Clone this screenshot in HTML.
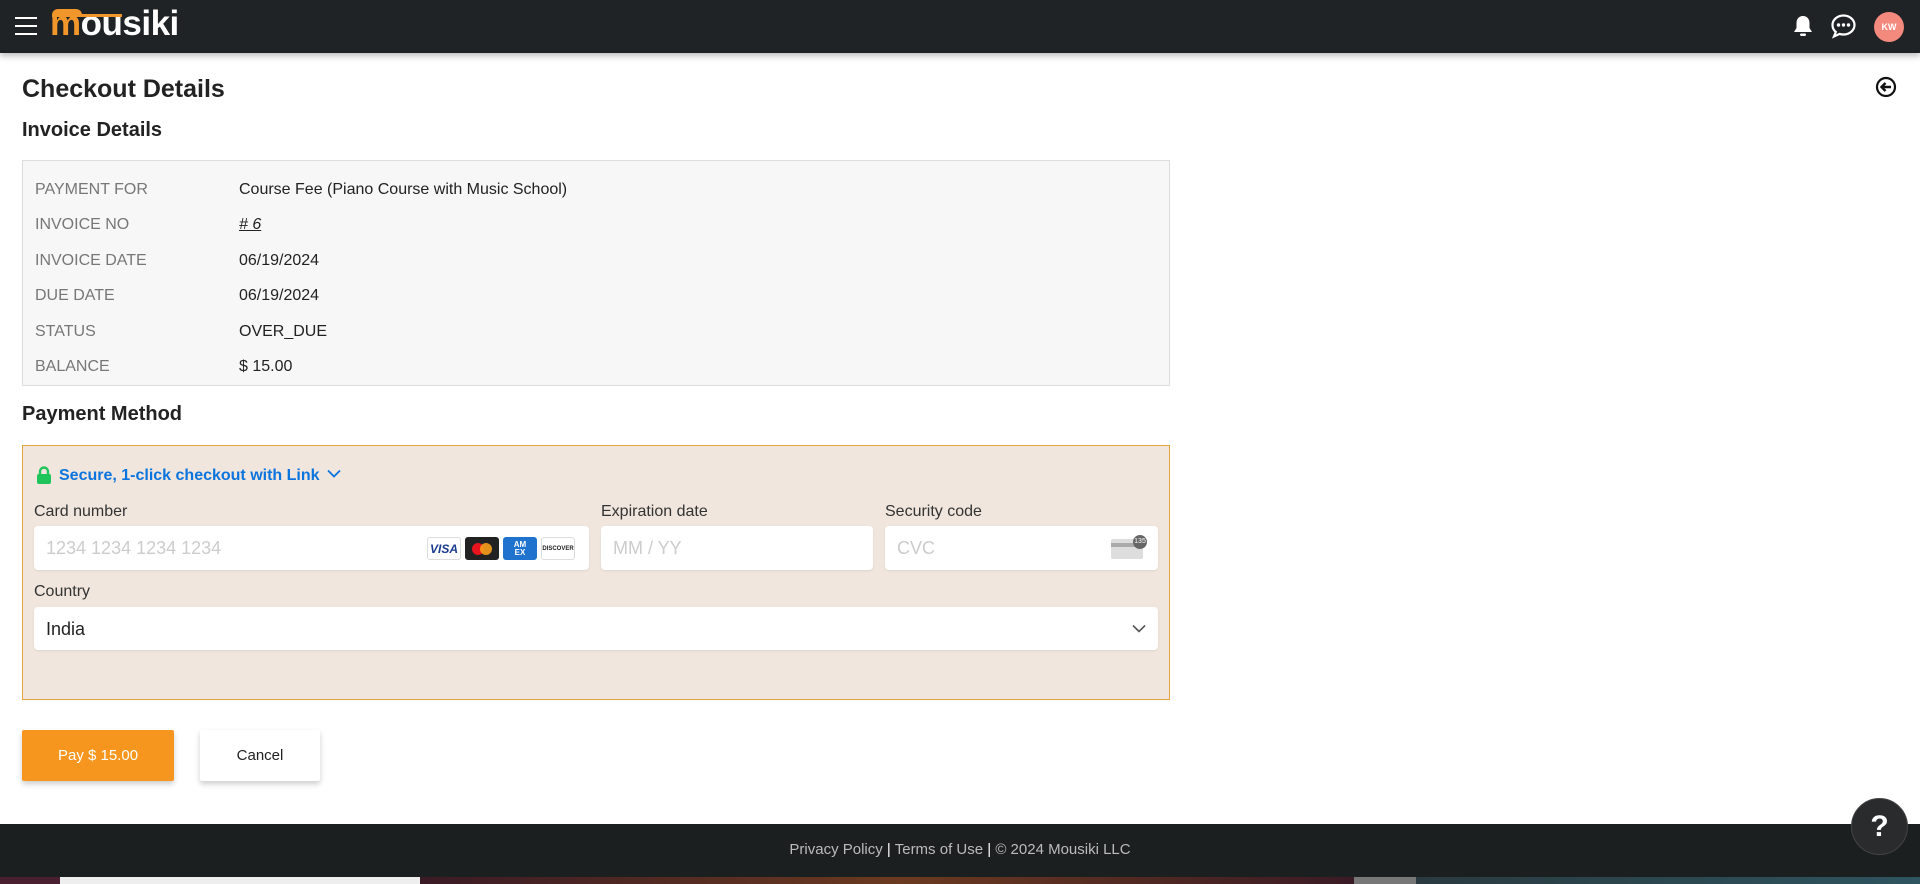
<!DOCTYPE html>
<html><head><meta charset="utf-8"><style>
*{box-sizing:border-box;margin:0;padding:0}
body{width:1920px;height:884px;overflow:hidden;background:#fff;font-family:"Liberation Sans",sans-serif;color:#222;position:relative}
.hdr{position:absolute;left:0;top:0;width:1920px;height:53px;background:#1f2326;box-shadow:0 3px 6px rgba(0,0,0,.25)}
.abs{position:absolute}
h1{position:absolute;left:22px;top:75px;font-size:25px;font-weight:bold;color:#222}
h2{position:absolute;left:22px;font-size:20px;font-weight:bold;color:#222}
.inv{position:absolute;left:22px;top:160px;width:1148px;height:226px;background:#f7f7f7;border:1px solid #ddd}
.row{position:absolute;left:12px;font-size:16px}
.row .l{position:absolute;left:0;color:#777;white-space:nowrap}
.row .v{position:absolute;left:204px;color:#222;white-space:nowrap}
.pay{position:absolute;left:22px;top:445px;width:1148px;height:255px;background:#f0e6dd;border:1px solid #e3a43f}
.lbl{position:absolute;font-size:16px;color:#333}
.inp{position:absolute;height:44px;background:#fff;border-radius:4px;box-shadow:0 1px 2px rgba(0,0,0,.08);font-size:18px;color:#ccc;padding:12px 12px;line-height:20px}
.btn{position:absolute;top:730px;height:51px;font-size:15px;display:flex;align-items:center;justify-content:center;box-shadow:0 3px 6px rgba(0,0,0,.2);border-radius:2px}
.ftr{position:absolute;left:0;top:824px;width:1920px;height:53px;background:#1c1f20;color:#bbb;font-size:15px;text-align:center;line-height:52px}
.strip{position:absolute;left:0;top:877px;width:1920px;height:7px;background:linear-gradient(90deg,#4a2030 0,#4a2030 60px,#eee 60px,#eee 420px,#3a1a25 420px,#6b3a20 900px,#3a1a25 1354px,#777 1354px,#777 1416px,#2a3a40 1416px,#2e5560 1920px)}
.card{position:absolute;top:11px;width:34px;height:23px;border-radius:3px;font-size:9px;font-weight:bold;display:flex;align-items:center;justify-content:center}
</style></head><body>
<div class="hdr">
 <div class="abs" style="left:15px;top:17px;width:22px;height:2px;background:#fff"></div>
 <div class="abs" style="left:15px;top:25px;width:22px;height:2px;background:#fff"></div>
 <div class="abs" style="left:15px;top:33px;width:22px;height:2px;background:#fff"></div>
 <div class="abs" style="left:50px;top:5px;font-size:35px;font-weight:bold;letter-spacing:-0.5px;line-height:38px"><span style="color:#f0962a">m</span><span style="color:#fff">ousiki</span></div>
 <div class="abs" style="left:52px;top:9px;width:30px;height:8px;border-radius:6px 6px 0 0;background:#f0962a"></div>
 <div class="abs" style="left:78px;top:14px;width:44px;height:3px;background:#f0962a"></div>
 <svg class="abs" style="left:1792px;top:14px" width="22" height="24" viewBox="0 0 22 24"><path d="M11 2c-4 0-6.5 3-6.5 7v5L2 18h18l-2.5-4V9c0-4-2.5-7-6.5-7z" fill="#fff"/><rect x="8" y="19.5" width="6" height="2.5" rx="1.2" fill="#fff"/></svg>
 <svg class="abs" style="left:1830px;top:13px" width="27" height="26" viewBox="0 0 27 26"><path d="M13.5 2.5c6 0 11 4.2 11 9.5s-5 9.5-11 9.5c-1.4 0-2.7-.2-3.9-.6L4 23.5l1.8-4.5C3.8 17.3 2.5 14.8 2.5 12c0-5.3 5-9.5 11-9.5z" fill="none" stroke="#fff" stroke-width="2.2"/><circle cx="8.5" cy="12" r="1.7" fill="#fff"/><circle cx="13.5" cy="12" r="1.7" fill="#fff"/><circle cx="18.5" cy="12" r="1.7" fill="#fff"/></svg>
 <div class="abs" style="left:1874px;top:12px;width:30px;height:30px;border-radius:50%;background:#f4897d;color:#fff;font-size:9px;font-weight:bold;text-align:center;line-height:30px">KW</div>
</div>
<h1>Checkout Details</h1>
<svg class="abs" style="left:1875px;top:76px" width="22" height="22" viewBox="0 0 22 22"><circle cx="11" cy="11" r="9" fill="none" stroke="#111" stroke-width="2.2"/><path d="M16 11H7M10.5 7L6.5 11l4 4" fill="none" stroke="#111" stroke-width="2.4"/></svg>
<h2 style="top:119px">Invoice Details</h2>
<div class="inv">
 <div class="row" style="top:20px"><span class="l">PAYMENT FOR</span><span class="v">Course Fee (Piano Course with Music School)</span></div>
 <div class="row" style="top:55px"><span class="l">INVOICE NO</span><span class="v" style="font-style:italic;text-decoration:underline"># 6</span></div>
 <div class="row" style="top:91px"><span class="l">INVOICE DATE</span><span class="v">06/19/2024</span></div>
 <div class="row" style="top:126px"><span class="l">DUE DATE</span><span class="v">06/19/2024</span></div>
 <div class="row" style="top:162px"><span class="l">STATUS</span><span class="v">OVER_DUE</span></div>
 <div class="row" style="top:197px"><span class="l">BALANCE</span><span class="v">$ 15.00</span></div>
</div>
<h2 style="top:403px">Payment Method</h2>
<div class="pay">
 <svg class="abs" style="left:13px;top:20px" width="16" height="19" viewBox="0 0 16 19"><path d="M4 8V5.5a4 4 0 018 0V8" fill="none" stroke="#1fc45b" stroke-width="2.4"/><rect x="1" y="8" width="14" height="10" rx="2" fill="#1fc45b"/></svg>
 <div class="abs" style="left:36px;top:21px;font-size:16px;font-weight:bold;color:#0b74de;white-space:nowrap">Secure, 1-click checkout with Link <svg width="14" height="9" viewBox="0 0 14 9" style="margin-left:3px;vertical-align:2px"><path d="M1 1.5l6 6 6-6" fill="none" stroke="#0b74de" stroke-width="1.8"/></svg></div>
 <div class="lbl" style="left:11px;top:57px">Card number</div>
 <div class="lbl" style="left:578px;top:57px">Expiration date</div>
 <div class="lbl" style="left:862px;top:57px">Security code</div>
 <div class="inp" style="left:11px;top:80px;width:555px">1234 1234 1234 1234
  <div class="card" style="left:393px;background:#fff;border:1px solid #ddd;color:#1a3b8f;font-style:italic;font-size:12px">VISA</div>
  <div class="card" style="left:431px;background:#222"><span style="display:inline-block;width:12px;height:12px;border-radius:50%;background:#e8141e"></span><span style="display:inline-block;width:12px;height:12px;border-radius:50%;background:#f79e1b;margin-left:-4px;opacity:.9"></span></div>
  <div class="card" style="left:469px;background:#1f72cd;color:#fff;font-size:8px;line-height:8px;text-align:center">AM<br>EX</div>
  <div class="card" style="left:507px;background:#fff;border:1px solid #ddd;color:#222;font-size:6px">DISCOVER</div>
 </div>
 <div class="inp" style="left:578px;top:80px;width:272px">MM / YY</div>
 <div class="inp" style="left:862px;top:80px;width:273px">CVC
  <div class="abs" style="left:226px;top:13px;width:32px;height:20px;background:#ddd;border-radius:2px"></div>
  <div class="abs" style="left:226px;top:17px;width:32px;height:4px;background:#aaa"></div>
  <div class="abs" style="left:248px;top:9px;width:14px;height:14px;border-radius:50%;background:#666;color:#fff;font-size:7px;line-height:14px;text-align:center">135</div>
 </div>
 <div class="lbl" style="left:11px;top:137px">Country</div>
 <div class="inp" style="left:11px;top:161px;width:1124px;color:#222;height:43px;font-size:18px">India
  <svg class="abs" style="right:12px;top:17px" width="14" height="9" viewBox="0 0 14 9"><path d="M1 1.5l6 6 6-6" fill="none" stroke="#555" stroke-width="1.6"/></svg>
 </div>
</div>
<div class="btn" style="left:22px;width:152px;background:#f7961e;color:#fff">Pay $ 15.00</div>
<div class="btn" style="left:200px;width:120px;background:#fff;color:#222">Cancel</div>
<div class="ftr">Privacy Policy <span style="color:#fff">|</span> Terms of Use <span style="color:#fff">|</span> © 2024 Mousiki LLC</div>
<div class="strip"></div>
<div class="abs" style="left:1851px;top:798px;width:57px;height:57px;border-radius:50%;background:#2a2b2d;border:1px solid #444;color:#fff;font-size:30px;font-weight:bold;text-align:center;line-height:55px">?</div>
</body></html>
